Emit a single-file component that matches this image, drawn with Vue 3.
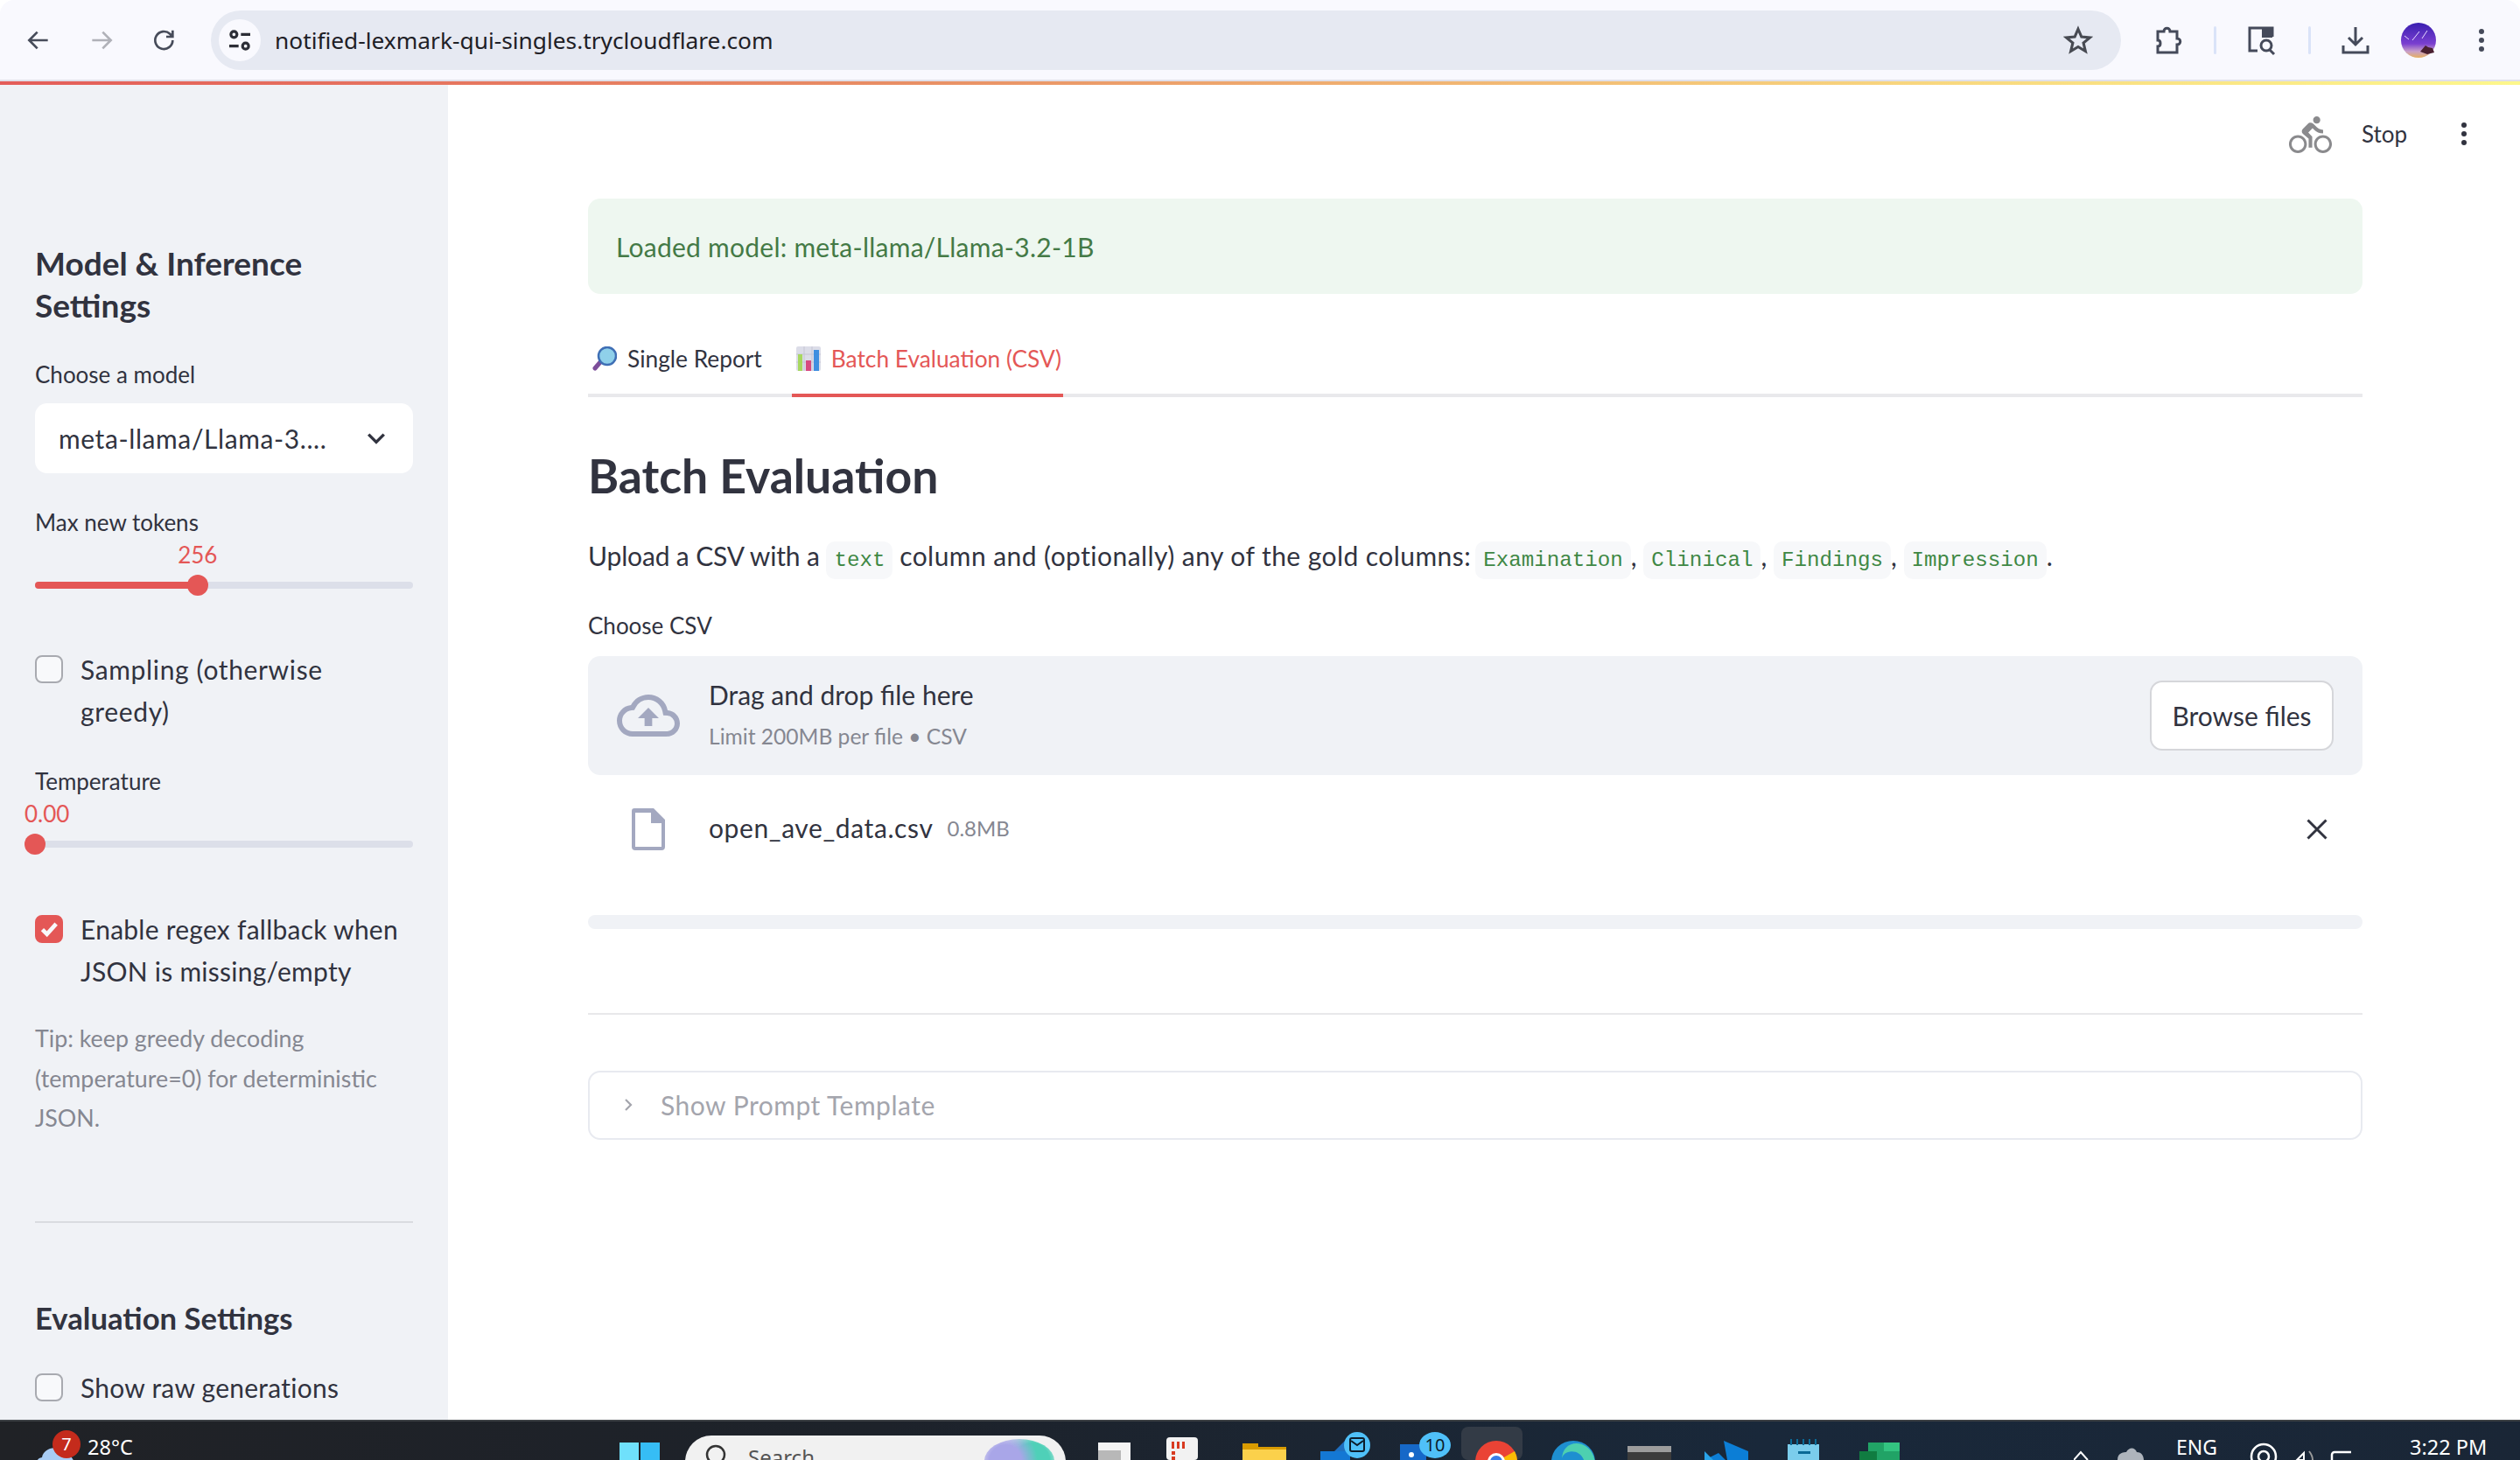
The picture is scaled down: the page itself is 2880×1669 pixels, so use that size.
<template>
  <div class="screen">
    <!-- browser chrome -->
    <header class="browser">
      <div class="nav-icons">
        <svg class="nav" viewBox="0 0 24 24"><path d="M20 12H5M11 5l-7 7 7 7" /></svg>
        <svg class="nav nav-off" viewBox="0 0 24 24"><path d="M4 12h15M13 5l7 7-7 7" /></svg>
        <svg class="nav" viewBox="0 0 24 24"><path d="M19 12a7.500 7.500 0 1 1-2.300-5.400L19 9M19 3.500V9h-5.500" /></svg>
      </div>
      <div class="omnibox">
        <span class="site-chip">
          <svg viewBox="0 0 24 24" class="tune"><circle cx="7" cy="7" r="2.600" /><path d="M13 7h8M3 17h8" /><circle cx="17" cy="17" r="2.600" /></svg>
        </span>
        <span class="url">notified-lexmark-qui-singles.trycloudflare.com</span>
        <svg class="star" viewBox="0 0 24 24"><path d="M12 3l2.700 6.200 6.800.6-5.200 4.400 1.600 6.600L12 17.300 6.100 20.800l1.600-6.600L2.500 9.800l6.800-.6z" /></svg>
      </div>
      <div class="browser-tools">
        <svg class="tool tool-ext" viewBox="0 0 30 36"><path d="M3 8h7c0-5 7-5 7 0h8v8c5 0 5 7 0 7v9H3v-7c4 0 4-7 0-7z" /></svg>
        <i class="tool-sep"></i>
        <svg class="tool tool-lens" viewBox="0 0 36 36"><path d="M14 30H5V4h26v10" /><path class="solid" d="M19 4h12v11H19z" /><circle cx="24" cy="24" r="6" /><path d="M28 29l5 5" /></svg>
        <i class="tool-sep"></i>
        <svg class="tool tool-down" viewBox="0 0 36 36"><path d="M18 3v20M10 15l8 8 8-8M4 24v8h28v-8" /></svg>
        <svg class="avatar" viewBox="0 0 40 40">
          <defs>
            <linearGradient id="sky" x1="0" y1="0" x2="0" y2="1">
              <stop offset="0" stop-color="#3a1fb0" />
              <stop offset="0.6" stop-color="#7a3fd0" />
              <stop offset="0.82" stop-color="#c9a0c8" />
              <stop offset="1" stop-color="#e6b060" />
            </linearGradient>
          </defs>
          <circle cx="20" cy="20" r="20" fill="url(#sky)" />
          <path d="M22 33l6-7 3 2 5 1 2 5-8 2z" fill="#4a2030" />
          <path d="M13 20l8-10M24 18l6-9M4 15l5 4" stroke="#e8dcff" stroke-width="1" />
        </svg>
        <svg class="tool-dots" viewBox="0 0 8 30"><circle cx="4" cy="5" r="3" /><circle cx="4" cy="15" r="3" /><circle cx="4" cy="25" r="3" /></svg>
      </div>
    </header>
    <div class="load-line"></div>

    <div class="app-body">
      <aside class="sidebar">
        <h3 class="side-title">Model &amp; Inference Settings</h3>
        <div class="side-label first-label">Choose a model</div>
        <div class="select">
          <span>meta-llama/Llama-3....</span>
          <svg viewBox="0 0 24 24"><path d="M5 8.500l7 7 7-7" /></svg>
        </div>
        <div class="side-label gap-label">Max new tokens</div>
        <div class="slider">
          <div class="slider-value" :style="{ left: `${tokens.pct}%` }">{{ tokens.text }}</div>
          <div class="track">
            <div class="fill" :style="{ width: `${tokens.pct}%` }"></div>
            <div class="thumb" :style="{ left: `${tokens.pct}%` }"></div>
          </div>
        </div>
        <label class="check check-a">
          <span class="box"></span>
          <span>Sampling (otherwise greedy)</span>
        </label>
        <div class="side-label gap-label">Temperature</div>
        <div class="slider">
          <div class="slider-value value-start">{{ temperature.text }}</div>
          <div class="track">
            <div class="thumb" :style="{ left: `${temperature.pct}%` }"></div>
          </div>
        </div>
        <label class="check check-b">
          <span class="box box-on">
            <svg viewBox="0 0 24 24"><path d="M5.500 12.500l4.500 4.500 9-10" /></svg>
          </span>
          <span>Enable regex fallback when JSON is missing/empty</span>
        </label>
        <p class="tip">Tip: keep greedy decoding (temperature=0) for deterministic JSON.</p>
        <hr class="side-rule" />
        <h3 class="side-title eval-title">Evaluation Settings</h3>
        <label class="check check-c">
          <span class="box"></span>
          <span>Show raw generations</span>
        </label>
      </aside>

      <main class="main">
        <div class="run-status">
          <svg class="bike" viewBox="0 0 24 22.500"><path d="M15.500 5.500c1.100 0 2-.9 2-2s-.9-2-2-2-2 .9-2 2 .9 2 2 2zM5 12c-2.800 0-5 2.200-5 5s2.200 5 5 5 5-2.200 5-5-2.200-5-5-5zm0 8.500c-1.900 0-3.500-1.600-3.500-3.500s1.600-3.500 3.500-3.500 3.500 1.600 3.500 3.500-1.600 3.500-3.500 3.500zm5.800-10l2.400-2.400.8.8c1.300 1.300 3 2.100 5.100 2.100V9c-1.500 0-2.700-.6-3.600-1.500l-1.900-1.900c-.5-.4-1-.6-1.600-.6s-1.100.2-1.400.6L7.800 8.400c-.4.4-.6.9-.6 1.400 0 .6.200 1.100.6 1.400L11 14v5h2v-6.200l-2.200-2.300zM19 12c-2.800 0-5 2.200-5 5s2.200 5 5 5 5-2.200 5-5-2.200-5-5-5zm0 8.500c-1.900 0-3.500-1.600-3.500-3.500s1.600-3.500 3.500-3.500 3.500 1.600 3.500 3.500-1.600 3.500-3.500 3.500z" /></svg>
          <span class="stop">Stop</span>
          <svg class="menu-dots" viewBox="0 0 8 30"><circle cx="4" cy="5" r="3" /><circle cx="4" cy="15" r="3" /><circle cx="4" cy="25" r="3" /></svg>
        </div>

        <div class="alert">Loaded model: meta-llama/Llama-3.2-1B</div>

        <div class="tabs">
          <div class="tab">
            <svg class="emoji" viewBox="0 0 28 28">
              <path d="M9 18L3 25" stroke="#7d4e9a" stroke-width="5" stroke-linecap="round" />
              <circle cx="17" cy="11" r="10" fill="#8fd0ea" stroke="#3f6fb5" stroke-width="2.500" />
            </svg>
            <span>Single Report</span>
          </div>
          <div class="tab tab-active">
            <svg class="emoji" viewBox="0 0 28 28">
              <rect width="28" height="28" rx="2" fill="#dcdde8" />
              <path d="M0 9h28M0 18h28M9 0v28M18 0v28" stroke="#c5c6d4" stroke-width="1" />
              <rect x="2" y="9" width="5" height="19" fill="#a7d860" />
              <rect x="11" y="16" width="6" height="12" fill="#d84a80" />
              <rect x="20" y="4" width="6" height="24" fill="#3f8fe0" />
            </svg>
            <span>Batch Evaluation (CSV)</span>
          </div>
        </div>

        <h2 class="title">Batch Evaluation</h2>
        <p class="lead">
          <span class="lead-a">Upload a CSV with a</span> <code>text</code> <span class="lead-b">column and (optionally) any of the gold columns:</span>
          <code>Examination</code>, <code>Clinical</code>, <code>Findings</code>, <code>Impression</code>.
        </p>

        <div class="field-label">Choose CSV</div>
        <section class="dropzone">
          <svg class="cloud" viewBox="0 0 24 24"><path d="M19.350 10.040A7.490 7.490 0 0 0 12 4C9.110 4 6.600 5.640 5.350 8.040A5.994 5.994 0 0 0 0 14c0 3.310 2.690 6 6 6h13c2.760 0 5-2.240 5-5 0-2.640-2.050-4.780-4.650-4.960zM19 18H6c-2.210 0-4-1.790-4-4 0-2.050 1.530-3.760 3.560-3.970l1.070-.11.500-.95A5.469 5.469 0 0 1 12 6c2.620 0 4.880 1.860 5.390 4.430l.3 1.500 1.530.11A2.980 2.980 0 0 1 22 15c0 1.650-1.350 3-3 3zM8 13h2.550v3h2.900v-3H16l-4-4z" /></svg>
          <div class="drop-text">
            <div class="drop-main">Drag and drop file here</div>
            <div class="drop-sub">Limit 200MB per file • CSV</div>
          </div>
          <button class="browse">Browse files</button>
        </section>
        <div class="file-row">
          <svg class="file-icon" viewBox="0 0 38 48"><path d="M3 0h22l13 13v31a4 4 0 0 1-4 4H4a4 4 0 0 1-4-4V3a3 3 0 0 1 3-3zm1 5v39h30V17H22V5z" /></svg>
          <span class="file-name">open_ave_data.csv</span>
          <span class="file-size">0.8MB</span>
          <svg class="file-x" viewBox="0 0 24 24"><path d="M1.500 1.500l21 21M22.500 1.500l-21 21" /></svg>
        </div>
        <div class="empty-bar"></div>
        <hr class="main-rule" />
        <div class="expander">
          <svg viewBox="0 0 12 20"><path d="M3 4l6 6-6 6" /></svg>
          <span>Show Prompt Template</span>
        </div>
      </main>
    </div>

    <!-- windows taskbar, icons cut by the bottom of the capture -->
    <footer class="taskbar">
      <div class="weather">
        <svg class="weather-icon" viewBox="0 0 46 30"><path d="M6 30c-6-2-6-12 2-13C10 6 26 2 32 12c8 0 14 8 14 18z" fill="#a8cdf5" /></svg>
        <span class="weather-badge">7</span>
        <span class="temp">28°C</span>
      </div>
      <svg class="win" viewBox="0 0 46 20">
        <rect width="22" height="20" fill="#6fe0fb" />
        <rect x="24" width="22" height="20" fill="#36bdf5" />
      </svg>
      <div class="search">
        <svg viewBox="0 0 26 26"><circle cx="13" cy="14" r="10" /></svg>
        <span>Search</span>
        <i class="search-art"></i>
      </div>
      <svg class="apps" viewBox="0 0 930 46">
        <rect x="0" y="26" width="37" height="20" fill="#f4f4f4" />
        <rect x="-10" y="35" width="36" height="11" fill="#b8b8b8" />
        <rect x="78" y="20" width="36" height="26" rx="4" fill="#f2f2f2" />
        <path d="M84 25h3v8h-3zM90 25h3v8h-3zM96 25h3v8h-3z" fill="#d83a20" />
        <path d="M84 36h4v4h-4zM84 42h4v4h-4z" fill="#d83a20" />
        <path d="M165 27h18v4h32v15h-50z" fill="#d99b00" />
        <rect x="165" y="34" width="50" height="12" fill="#fbd14b" />
        <rect x="254" y="36" width="34" height="10" fill="#1478d4" />
        <path d="M270 36l12-12 8 12z" fill="#1e6fbf" />
        <ellipse cx="296" cy="29" rx="15" ry="15" fill="#4fc0f8" />
        <rect x="288" y="21" width="16" height="15" rx="2" fill="none" stroke="#0c1c2a" stroke-width="2" />
        <path d="M289 24l7 5 7-5" fill="none" stroke="#0c1c2a" stroke-width="2" />
        <rect x="345" y="28" width="30" height="18" fill="#1668c8" />
        <circle cx="358" cy="40" r="3" fill="#fff" />
        <ellipse cx="385" cy="29" rx="18" ry="15" fill="#4fc0f8" />
        <text x="385" y="36" class="app-badge">10</text>
        <rect x="415" y="8" width="70" height="38" rx="8" fill="#333b46" />
        <circle cx="455" cy="48" r="24" fill="#ea4335" />
        <path d="M476 36a24 24 0 0 1 3 12h-24z" fill="#fbbc04" />
        <circle cx="455" cy="48" r="10" fill="#fff" />
        <circle cx="455" cy="48" r="7" fill="#3a7de8" />
        <ellipse cx="543" cy="48" rx="25" ry="24" fill="#1e8fd0" />
        <path d="M530 46c0-14 26-14 26 6h12c0-30-38-34-38-6z" fill="#4dd0b0" />
        <rect x="605" y="30" width="50" height="16" fill="#3c3c3c" />
        <rect x="605" y="30" width="50" height="7" fill="#9c9c9c" />
        <path d="M693 46l16-8 8 8zM715 24l28 12v10h-24z" fill="#0c7ed6" />
        <path d="M693 36l10 10h-10z" fill="#29a3e8" />
        <rect x="788" y="28" width="36" height="18" fill="#7bcdec" />
        <rect x="800" y="36" width="14" height="3" fill="#0a6a96" />
        <path d="M792 22v7M799 22v7M806 22v7M813 22v7M820 22v7" stroke="#0a6a96" stroke-width="2" />
        <rect x="880" y="26" width="36" height="20" fill="#21a366" />
        <rect x="898" y="26" width="18" height="10" fill="#33c481" />
        <rect x="870" y="36" width="20" height="10" fill="#107c41" />
      </svg>
      <svg class="tray" viewBox="0 0 130 46">
        <path d="M0 46l8-9 8 9" fill="none" stroke="#fff" stroke-width="2" />
        <path d="M50 46c0-9 8-9 10-9 3-6 10-6 12 0 6 0 8 5 8 9z" fill="#aeb4bc" />
      </svg>
      <span class="lang">ENG</span>
      <svg class="tray-2" viewBox="0 0 130 46">
        <circle cx="30" cy="42" r="14" fill="none" stroke="#fff" stroke-width="2.500" />
        <circle cx="30" cy="42" r="6" fill="none" stroke="#fff" stroke-width="2.500" />
        <path d="M68 46l8-8v8z" fill="none" stroke="#fff" stroke-width="2" />
        <path d="M82 36q4 5 4 10" fill="none" stroke="#999" stroke-width="2" />
        <rect x="108" y="37" width="26" height="14" rx="3" fill="none" stroke="#fff" stroke-width="2.500" />
      </svg>
      <span class="clock">3:22 PM</span>
    </footer>
  </div>
</template>

<script setup>
const tokens = { text: '256', pct: 43 }
const temperature = { text: '0.00', pct: 0 }
</script>

<style>
html, body {
  margin: 0;
  background: #fff;
}
</style>

<style scoped>
.screen {
  width: 2880px;
  height: 1669px;
  display: flex;
  flex-direction: column;
  overflow: hidden;
  font-family: "Lato", "Noto Sans", sans-serif;
  color: #31333f;
  background: #fff;
}

/* browser chrome */
.browser {
  height: 91px;
  border-bottom: 2px solid #e0e0ea;
  border-radius: 16px 16px 0 0;
  background: #f9f9fe;
  display: flex;
  align-items: center;
  flex-shrink: 0;
}
.nav-icons {
  display: flex;
  gap: 40px;
  padding-left: 28px;
  width: 241px;
  box-sizing: border-box;
}
.nav {
  width: 32px;
  height: 32px;
  fill: none;
  stroke: #474c5a;
  stroke-width: 2;
}
.nav-off {
  stroke: #b0b1b8;
}
.omnibox {
  width: 2183px;
  height: 68px;
  border-radius: 34px;
  background: #e6e9f2;
  display: flex;
  align-items: center;
  padding-left: 9px;
  padding-right: 32px;
  box-sizing: border-box;
  flex-shrink: 0;
}
.site-chip {
  width: 48px;
  height: 48px;
  border-radius: 50%;
  background: #f9f9fe;
  display: flex;
  align-items: center;
  justify-content: center;
}
.tune {
  width: 32px;
  height: 32px;
  fill: none;
  stroke: #2c2e36;
  stroke-width: 2.400;
}
.url {
  margin-left: 16px;
  font-family: "Noto Sans", sans-serif;
  font-size: 26.300px;
  color: #1e2026;
  flex: 1;
}
.star {
  width: 34px;
  height: 34px;
  fill: none;
  stroke: #474a52;
  stroke-width: 2.200;
}
.browser-tools {
  display: flex;
  align-items: center;
  flex: 1;
  padding-left: 38px;
}
.tool {
  fill: none;
  stroke: #454a5a;
  stroke-width: 3;
  flex-shrink: 0;
}
.tool-ext {
  width: 32px;
  height: 36px;
}
.tool-sep {
  width: 3px;
  height: 32px;
  border-radius: 2px;
  background: #dae3f8;
}
.tool-ext + .tool-sep {
  margin-left: 36px;
}
.tool-lens {
  width: 36px;
  height: 36px;
  margin-left: 33px;
  margin-right: 36px;
}
.tool-lens .solid {
  fill: #454a5a;
  stroke: none;
}
.tool-down {
  width: 36px;
  height: 36px;
  margin-left: 33px;
}
.avatar {
  width: 40px;
  height: 40px;
  margin-left: 34px;
  flex-shrink: 0;
}
.tool-dots {
  width: 8px;
  height: 30px;
  margin-left: 48px;
  fill: #454a5a;
  flex-shrink: 0;
}
.load-line {
  height: 4px;
  flex-shrink: 0;
  background: linear-gradient(90deg, #e45d59 0%, #e88d64 35%, #f8d67e 76%, #fdf78c 100%);
}

/* page */
.app-body {
  flex: 1;
  min-height: 0;
  display: flex;
}
.sidebar {
  width: 512px;
  flex-shrink: 0;
  background: #f0f2f6;
  padding: 180px 40px 0;
  box-sizing: border-box;
  overflow: hidden;
}
.side-title {
  margin: 0;
  font-size: 37px;
  line-height: 48px;
  font-weight: 700;
}
.side-label {
  font-size: 26px;
  line-height: 40px;
}
.first-label {
  margin-top: 35px;
}
.gap-label {
  margin-top: 36px;
}
.select {
  margin-top: 13px;
  height: 80px;
  border-radius: 14px;
  background: #fff;
  display: flex;
  align-items: center;
  justify-content: space-between;
  padding: 0 27px 0 27px;
  font-size: 30px;
  letter-spacing: 0.6px;
}
.select svg {
  width: 30px;
  height: 30px;
  fill: none;
  stroke: #31333f;
  stroke-width: 2.800;
}
.slider {
  position: relative;
  padding: 40px 0 8px;
}
.slider-value {
  position: absolute;
  top: 0;
  transform: translateX(-50%);
  font-size: 26px;
  line-height: 34px;
  color: #e45756;
}
.value-start {
  left: -12px;
  transform: none;
}
.track {
  position: relative;
  height: 8px;
  margin-top: 8px;
  border-radius: 4px;
  background: #dcdfe9;
}
.fill {
  height: 100%;
  border-radius: 4px;
  background: #e45756;
}
.thumb {
  position: absolute;
  top: -8px;
  width: 24px;
  height: 24px;
  margin-left: -12px;
  border-radius: 50%;
  background: #e45756;
}
.check {
  display: flex;
  gap: 20px;
  font-size: 30px;
  letter-spacing: 0.25px;
  line-height: 48px;
}
.check-a {
  margin-top: 60px;
  padding-right: 20px;
  letter-spacing: 0.65px;
}
.check-b {
  margin-top: 61px;
}
.check-c {
  margin-top: 31px;
}
.box {
  flex: 0 0 32px;
  width: 32px;
  height: 32px;
  margin-top: 8px;
  border: 2px solid #a8aab0;
  border-radius: 8px;
  background: #f8f9fb;
  box-sizing: border-box;
}
.box-on {
  border-color: #e45756;
  background: #e45756;
}
.box-on svg {
  display: block;
  width: 100%;
  height: 100%;
  fill: none;
  stroke: #f8f9fb;
  stroke-width: 4;
}
.tip {
  margin: 31px 0 0;
  font-size: 26.800px;
  line-height: 45.500px;
  color: #858791;
}
.side-rule {
  margin: 94px 0 0;
  border: 0;
  border-top: 2px solid #d9dbe0;
}
.eval-title {
  margin-top: 85px;
  font-size: 34.700px;
}

.main {
  position: relative;
  flex: 1;
  padding: 131px 180px 0 160px;
  box-sizing: border-box;
}
.run-status {
  position: absolute;
  top: 33px;
  left: 2103px;
  display: flex;
  align-items: center;
  height: 46px;
}
.bike {
  width: 51px;
  height: 46px;
  fill: #8a8a8d;
}
.stop {
  margin-left: 33px;
  font-size: 26px;
}
.menu-dots {
  width: 8px;
  height: 30px;
  margin-left: 61px;
  fill: #31333f;
}
.alert {
  height: 109px;
  margin-top: -1px;
  border-radius: 14px;
  background: #eef7f0;
  color: #447a46;
  padding-left: 32px;
  display: flex;
  align-items: center;
  font-size: 30px;
  letter-spacing: 0.25px;
}
.tabs {
  margin-top: 34px;
  height: 80px;
  border-bottom: 4px solid #e9e9ec;
  display: flex;
  gap: 34px;
}
.tab {
  height: 84px;
  padding-bottom: 4px;
  box-sizing: border-box;
  display: flex;
  align-items: center;
  gap: 12px;
  font-size: 26.300px;
}
.tab:first-child {
  padding-left: 5px;
}
.tab-active {
  color: #e45756;
  border-bottom: 4px solid #e45756;
  padding: 0 2px 0 5px;
}
.emoji {
  width: 28px;
  height: 28px;
  flex-shrink: 0;
}
.title {
  margin: 54px 0 0;
  font-size: 53.500px;
  line-height: 70px;
  font-weight: 700;
}
.lead {
  margin: 33px 0 0;
  font-size: 30px;
  line-height: 48px;
}
.lead-a {
  letter-spacing: -0.15px;
}
.lead-b {
  letter-spacing: 0.44px;
  margin-right: 5px;
}
code {
  font-family: "Liberation Mono", monospace;
  font-size: 24.200px;
  line-height: 1;
  letter-spacing: 0;
  color: #3f8845;
  background: #f7f8fa;
  border-radius: 10px;
  padding: 8px 9px;
}
.field-label {
  margin-top: 36px;
  font-size: 26px;
  line-height: 40px;
}
.dropzone {
  margin-top: 15px;
  height: 136px;
  border-radius: 14px;
  background: #f0f2f6;
  display: flex;
  align-items: center;
  padding: 0 33px;
}
.cloud {
  width: 72px;
  height: 72px;
  fill: #a3a8c0;
  flex-shrink: 0;
}
.drop-text {
  margin-left: 33px;
  flex: 1;
}
.drop-main {
  font-size: 30px;
  line-height: 47px;
}
.drop-sub {
  font-size: 24.600px;
  line-height: 47px;
  color: #858791;
}
.browse {
  width: 210px;
  height: 80px;
  border: 2px solid #d5d6da;
  border-radius: 14px;
  background: #fff;
  font: inherit;
  font-size: 30px;
  color: #31333f;
  padding: 0;
}
.file-row {
  height: 124px;
  display: flex;
  align-items: center;
  padding-left: 50px;
}
.file-icon {
  width: 38px;
  height: 48px;
  fill: #a3a8c0;
}
.file-name {
  margin: 0 0 4px 50px;
  font-size: 30px;
  letter-spacing: 0.6px;
}
.file-size {
  margin: 0 0 4px 16px;
  font-size: 24px;
  color: #858791;
}
.file-x {
  margin-left: auto;
  margin-right: 40px;
  width: 24px;
  height: 24px;
  fill: none;
  stroke: #31333f;
  stroke-width: 3;
}
.empty-bar {
  margin-top: 36px;
  height: 16px;
  border-radius: 8px;
  background: #f0f2f6;
}
.main-rule {
  margin: 96px 0 0;
  border: 0;
  border-top: 2px solid #e8e8ea;
}
.expander {
  margin-top: 64px;
  height: 79px;
  border: 2px solid #e8eaf0;
  border-radius: 14px;
  box-sizing: border-box;
  display: flex;
  align-items: center;
  padding: 0 0 2px 38px;
  gap: 31px;
  font-size: 30px;
  letter-spacing: 0.5px;
  color: #a4a5ad;
}
.expander svg {
  width: 12px;
  height: 20px;
  fill: none;
  stroke: #a4a5ad;
  stroke-width: 2.200;
}

/* taskbar */
.taskbar {
  height: 46px;
  flex-shrink: 0;
  border-top: 2px solid #3c4044;
  box-sizing: border-box;
  background: linear-gradient(90deg, #202226 0%, #1d222a 35%, #19283a 70%, #1a2636 100%);
  display: flex;
  align-items: flex-start;
  overflow: hidden;
  color: #fff;
  font-family: "Noto Sans", sans-serif;
}
.weather {
  position: relative;
  width: 708px;
  height: 44px;
  flex-shrink: 0;
}
.weather-icon {
  position: absolute;
  left: 40px;
  top: 24px;
  width: 46px;
  height: 30px;
}
.weather-badge {
  position: absolute;
  left: 60px;
  top: 10px;
  width: 32px;
  height: 32px;
  border-radius: 50%;
  background: #c42b1c;
  text-align: center;
  font-size: 20px;
  line-height: 32px;
}
.temp {
  position: absolute;
  left: 100px;
  top: 14px;
  font-size: 23.500px;
  line-height: 30px;
}
.win {
  width: 46px;
  height: 20px;
  margin-top: 24px;
  flex-shrink: 0;
}
.search {
  margin-left: 29px;
  margin-top: 16px;
  width: 435px;
  height: 60px;
  border-radius: 30px;
  background: #f1f1f1;
  display: flex;
  align-items: flex-start;
  flex-shrink: 0;
  position: relative;
  color: #555;
  font-size: 24px;
}
.search svg {
  width: 26px;
  height: 26px;
  margin: 8px 0 0 22px;
  fill: none;
  stroke: #333;
  stroke-width: 2.500;
}
.search span {
  margin: 10px 0 0 24px;
  line-height: 30px;
}
.search-art {
  position: absolute;
  left: 342px;
  top: 4px;
  width: 80px;
  height: 50px;
  border-radius: 50%;
  background: radial-gradient(circle at 30% 50%, #a9a6e8 0 30%, transparent 60%), radial-gradient(circle at 68% 50%, #4fd0b8 0 34%, transparent 60%);
}
.apps {
  width: 930px;
  height: 46px;
  margin-left: 37px;
  margin-top: -2px;
  flex-shrink: 0;
}
.app-badge {
  font-size: 20px;
  fill: #0c1c2a;
  text-anchor: middle;
  font-family: "Noto Sans", sans-serif;
}
.tray {
  width: 130px;
  height: 46px;
  margin-left: 185px;
  margin-top: -2px;
  flex-shrink: 0;
}
.lang {
  margin-left: -13px;
  margin-top: 14px;
  font-size: 23px;
  line-height: 30px;
  width: 60px;
  flex-shrink: 0;
}
.tray-2 {
  width: 130px;
  height: 46px;
  margin-left: 10px;
  margin-top: -2px;
  flex-shrink: 0;
}
.clock {
  margin-left: 67px;
  margin-top: 14px;
  font-size: 23.500px;
  line-height: 30px;
  white-space: nowrap;
}
</style>
